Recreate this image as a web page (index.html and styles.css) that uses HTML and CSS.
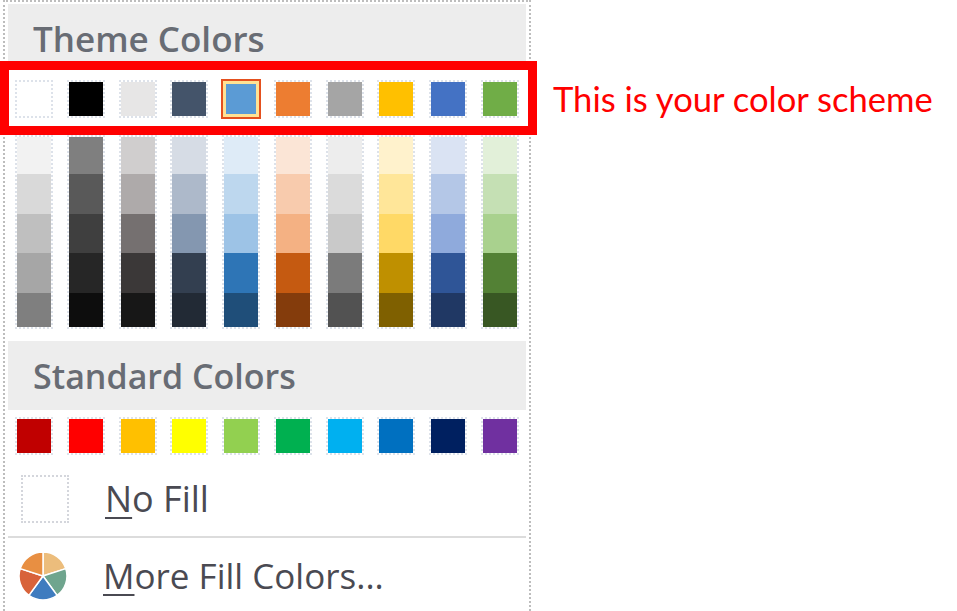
FILE: index.html
```html
<!DOCTYPE html>
<html lang="en">
<head>
    <meta charset="UTF-8">
    <meta name="viewport" content="width=device-width, initial-scale=1.0">
    <title>Theme Colors</title>
    <link rel="stylesheet" href="styles.css">
</head>
<body>

    <div class="menu">
        <div class="menu-header theme-header">Theme Colors</div>

        <div class="scheme-box">
            <div class="swatch-row">
                <div class="swatch c-ffffff"></div>
                <div class="swatch c-000000"></div>
                <div class="swatch c-e7e6e6"></div>
                <div class="swatch c-44546a"></div>
                <div class="swatch c-5b9bd5 selected"></div>
                <div class="swatch c-ed7d31"></div>
                <div class="swatch c-a5a5a5"></div>
                <div class="swatch c-ffc000"></div>
                <div class="swatch c-4472c4"></div>
                <div class="swatch c-70ad47"></div>
            </div>
            <div class="scheme-note">This is your color scheme</div>
        </div>

        <div class="swatch-row shade-row">
            <div class="shade-col"><div class="c-f2f2f2"></div><div class="c-d9d9d9"></div><div class="c-bfbfbf"></div><div class="c-a6a6a6"></div><div class="c-7f7f7f"></div></div>
            <div class="shade-col"><div class="c-7f7f7f"></div><div class="c-595959"></div><div class="c-3f3f3f"></div><div class="c-262626"></div><div class="c-0d0d0d"></div></div>
            <div class="shade-col"><div class="c-d0cece"></div><div class="c-aeaaaa"></div><div class="c-757070"></div><div class="c-3b3838"></div><div class="c-171717"></div></div>
            <div class="shade-col"><div class="c-d6dce5"></div><div class="c-adb9ca"></div><div class="c-8497b0"></div><div class="c-333f50"></div><div class="c-222a35"></div></div>
            <div class="shade-col"><div class="c-deebf7"></div><div class="c-bdd7ee"></div><div class="c-9dc3e6"></div><div class="c-2e75b6"></div><div class="c-1f4e79"></div></div>
            <div class="shade-col"><div class="c-fbe5d6"></div><div class="c-f8cbad"></div><div class="c-f4b183"></div><div class="c-c55a11"></div><div class="c-843c0c"></div></div>
            <div class="shade-col"><div class="c-ededed"></div><div class="c-dbdbdb"></div><div class="c-c9c9c9"></div><div class="c-7b7b7b"></div><div class="c-525252"></div></div>
            <div class="shade-col"><div class="c-fff2cc"></div><div class="c-ffe699"></div><div class="c-ffd966"></div><div class="c-bf9000"></div><div class="c-7f6000"></div></div>
            <div class="shade-col"><div class="c-dae3f3"></div><div class="c-b4c7e7"></div><div class="c-8faadc"></div><div class="c-2f5597"></div><div class="c-203864"></div></div>
            <div class="shade-col"><div class="c-e2f0d9"></div><div class="c-c5e0b4"></div><div class="c-a9d18e"></div><div class="c-538135"></div><div class="c-385723"></div></div>
        </div>

        <div class="menu-header standard-header">Standard Colors</div>

        <div class="swatch-row standard-row">
            <div class="swatch c-c00000"></div>
            <div class="swatch c-ff0000"></div>
            <div class="swatch c-ffc000"></div>
            <div class="swatch c-ffff00"></div>
            <div class="swatch c-92d050"></div>
            <div class="swatch c-00b050"></div>
            <div class="swatch c-00b0f0"></div>
            <div class="swatch c-0070c0"></div>
            <div class="swatch c-002060"></div>
            <div class="swatch c-7030a0"></div>
        </div>

        <div class="menu-item no-fill">
            <div class="no-fill-box"></div>
            <span class="item-label"><u>N</u>o Fill</span>
        </div>

        <div class="separator"></div>

        <div class="menu-item more-colors">
            <svg class="wheel" width="48" height="48" viewBox="0 0 48 48">
                <g stroke="#fff" stroke-width="1.5" stroke-linejoin="round">
                    <path fill="#ecbd7c" d="M24 24 L24 0 A24 24 0 0 1 46.8 16.6 Z"/>
                    <path fill="#6fa58e" d="M24 24 L46.8 16.6 A24 24 0 0 1 38.1 43.4 Z"/>
                    <path fill="#3f7cbf" d="M24 24 L38.1 43.4 A24 24 0 0 1 9.9 43.4 Z"/>
                    <path fill="#d8633a" d="M24 24 L9.9 43.4 A24 24 0 0 1 1.2 16.6 Z"/>
                    <path fill="#e88f42" d="M24 24 L1.2 16.6 A24 24 0 0 1 24 0 Z"/>
                </g>
            </svg>
            <span class="item-label"><u>M</u>ore Fill Colors...</span>
        </div>
    </div>

</body>
</html>
```

FILE: styles.css
```css
html, body {
    height: 100%;
}

body {
    font-family: "Open Sans", "Noto Sans", sans-serif;
    background-color: #fff;
    margin: 0;
    overflow: hidden;
}

.menu {
    box-sizing: border-box;
    width: 528px;
    height: 611px;
    margin-left: 3px;
    padding: 2px 3px 0;
    border: 2px dotted #bdbdbd;
    border-bottom: none;
}

.menu-header {
    box-sizing: border-box;
    background: #ededed;
    padding-left: 25px;
    font-size: 34px;
    font-weight: 600;
    color: #686c74;
    white-space: nowrap;
}

.theme-header {
    height: 57px;
    font-size: 35px;
    line-height: 69px;
}

.standard-header {
    height: 69px;
    line-height: 70px;
    margin-top: 12px;
}

/* red frame sticks out of the menu on both sides */
.scheme-box {
    position: relative;
    box-sizing: border-box;
    width: 537px;
    height: 74px;
    margin-left: -8px;
    padding: 10px 9px 0 6px;
    border: 9px solid #ff0000;
}

.scheme-note {
    position: absolute;
    left: 544px;
    top: 9px;
    font-family: Lato, sans-serif;
    font-size: 34.6px;
    line-height: 40px;
    color: #ff0000;
    white-space: nowrap;
}

.swatch-row {
    display: flex;
    justify-content: space-between;
}

.swatch {
    box-sizing: border-box;
    width: 38px;
    height: 38px;
    border: 2px dotted #dde2ea;
    background-clip: padding-box;
}

.swatch.selected {
    width: 40px;
    height: 40px;
    margin: -1px;
    border: 2px solid #e4501e;
    box-shadow: inset 0 0 0 3px #ffe294;
}

.shade-row {
    width: 504px;
    margin: 0 0 0 7px;
}

.shade-col {
    box-sizing: border-box;
    width: 38px;
    height: 194px;
    border: 2px dotted #dde2ea;
    display: grid;
    grid-template-rows: 37px 40px 39px 40px 34px;
}

.standard-row {
    width: 504px;
    margin: 7px 0 0 7px;
}

.menu-item {
    display: flex;
    align-items: center;
}

.item-label {
    font-size: 35px;
    color: #4a4a52;
    white-space: nowrap;
}

.item-label u {
    text-underline-offset: 5px;
    text-decoration-thickness: 2px;
}

.no-fill {
    margin-top: 20px;
    height: 48px;
    padding-left: 13px;
    gap: 36px;
}

.no-fill-box {
    box-sizing: border-box;
    width: 48px;
    height: 48px;
    border: 2px dotted #d4d6dc;
}

.no-fill .item-label {
    font-size: 36px;
    line-height: 44px;
}

.separator {
    height: 2px;
    margin-top: 13px;
    background: #dcdcdc;
}

.more-colors {
    margin-top: 14px;
    height: 48px;
    padding-left: 11px;
    gap: 36px;
}

.more-colors .item-label {
    line-height: 44px;
}

.wheel {
    flex-shrink: 0;
}

/* theme colours */
.c-ffffff { background-color: #ffffff; }
.c-000000 { background-color: #000000; }
.c-e7e6e6 { background-color: #e7e6e6; }
.c-44546a { background-color: #44546a; }
.c-5b9bd5 { background-color: #5b9bd5; }
.c-ed7d31 { background-color: #ed7d31; }
.c-a5a5a5 { background-color: #a5a5a5; }
.c-ffc000 { background-color: #ffc000; }
.c-4472c4 { background-color: #4472c4; }
.c-70ad47 { background-color: #70ad47; }

/* shades */
.c-f2f2f2 { background-color: #f2f2f2; }
.c-d9d9d9 { background-color: #d9d9d9; }
.c-bfbfbf { background-color: #bfbfbf; }
.c-a6a6a6 { background-color: #a6a6a6; }
.c-7f7f7f { background-color: #7f7f7f; }
.c-595959 { background-color: #595959; }
.c-3f3f3f { background-color: #3f3f3f; }
.c-262626 { background-color: #262626; }
.c-0d0d0d { background-color: #0d0d0d; }
.c-d0cece { background-color: #d0cece; }
.c-aeaaaa { background-color: #aeaaaa; }
.c-757070 { background-color: #757070; }
.c-3b3838 { background-color: #3b3838; }
.c-171717 { background-color: #171717; }
.c-d6dce5 { background-color: #d6dce5; }
.c-adb9ca { background-color: #adb9ca; }
.c-8497b0 { background-color: #8497b0; }
.c-333f50 { background-color: #333f50; }
.c-222a35 { background-color: #222a35; }
.c-deebf7 { background-color: #deebf7; }
.c-bdd7ee { background-color: #bdd7ee; }
.c-9dc3e6 { background-color: #9dc3e6; }
.c-2e75b6 { background-color: #2e75b6; }
.c-1f4e79 { background-color: #1f4e79; }
.c-fbe5d6 { background-color: #fbe5d6; }
.c-f8cbad { background-color: #f8cbad; }
.c-f4b183 { background-color: #f4b183; }
.c-c55a11 { background-color: #c55a11; }
.c-843c0c { background-color: #843c0c; }
.c-ededed { background-color: #ededed; }
.c-dbdbdb { background-color: #dbdbdb; }
.c-c9c9c9 { background-color: #c9c9c9; }
.c-7b7b7b { background-color: #7b7b7b; }
.c-525252 { background-color: #525252; }
.c-fff2cc { background-color: #fff2cc; }
.c-ffe699 { background-color: #ffe699; }
.c-ffd966 { background-color: #ffd966; }
.c-bf9000 { background-color: #bf9000; }
.c-7f6000 { background-color: #7f6000; }
.c-dae3f3 { background-color: #dae3f3; }
.c-b4c7e7 { background-color: #b4c7e7; }
.c-8faadc { background-color: #8faadc; }
.c-2f5597 { background-color: #2f5597; }
.c-203864 { background-color: #203864; }
.c-e2f0d9 { background-color: #e2f0d9; }
.c-c5e0b4 { background-color: #c5e0b4; }
.c-a9d18e { background-color: #a9d18e; }
.c-538135 { background-color: #538135; }
.c-385723 { background-color: #385723; }

/* standard colours */
.c-c00000 { background-color: #c00000; }
.c-ff0000 { background-color: #ff0000; }
.c-ffff00 { background-color: #ffff00; }
.c-92d050 { background-color: #92d050; }
.c-00b050 { background-color: #00b050; }
.c-00b0f0 { background-color: #00b0f0; }
.c-0070c0 { background-color: #0070c0; }
.c-002060 { background-color: #002060; }
.c-7030a0 { background-color: #7030a0; }
```
